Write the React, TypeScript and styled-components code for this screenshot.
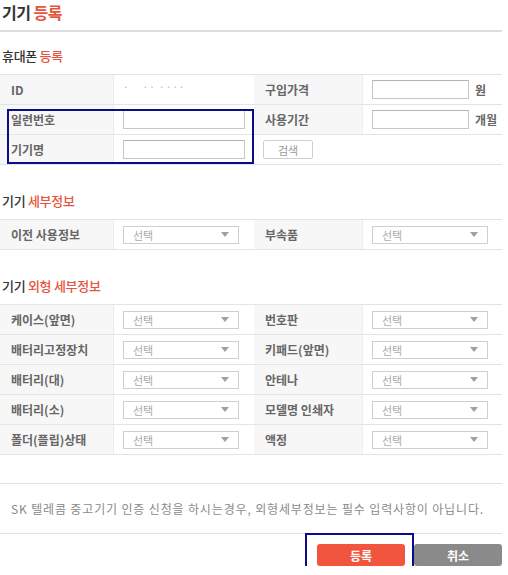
import React from 'react';
import styled, { createGlobalStyle } from 'styled-components';

const GlobalStyle = createGlobalStyle`
  html, body {
    margin: 0;
    padding: 0;
    background: #fff;
  }
  body {
    font-family: "Noto Sans CJK KR", "Noto Sans", sans-serif;
    color: #333;
  }
`;

const Page = styled.div`
  position: relative;
  width: 502px;
`;

const Title = styled.h1`
  margin: 0;
  padding: 0 2px;
  height: 30px;
  line-height: 24px;
  font-size: 16px;
  font-weight: 700;
  color: #333;
  letter-spacing: -0.5px;
`;

const Accent = styled.span`
  color: #e8533d;
`;

const TopRule = styled.div`
  height: 2px;
  background: #dcdcdc;
`;

const Heading = styled.h2<{ $top: number }>`
  margin: ${p => p.$top}px 0 8px;
  padding: 0 2px;
  height: 20px;
  line-height: 20px;
  font-size: 13px;
  font-weight: 500;
  color: #333;
  letter-spacing: -0.3px;
`;

const Table = styled.div`
  border-top: 1px solid #e4e4e4;
`;

const Row = styled.div`
  display: grid;
  grid-template-columns: 113px 141px 108px 1fr;
  height: 30px;
  box-sizing: border-box;
  border-bottom: 1px solid #e4e4e4;
`;

const Label = styled.div`
  display: flex;
  align-items: center;
  padding-left: 11px;
  background: #f7f7f7;
  font-size: 12px;
  font-weight: 700;
  color: #666;
  white-space: nowrap;
`;

const Cell = styled.div<{ $span?: number }>`
  display: flex;
  align-items: center;
  gap: 4px;
  padding-left: 9px;
  border-left: 1px solid #ededed;
  grid-column: ${p => (p.$span ? `span ${p.$span}` : 'auto')};
`;

const PlainCell = styled(Cell)`
  border-left: none;
`;

const TextInput = styled.input<{ $w: number }>`
  box-sizing: border-box;
  width: ${p => p.$w}px;
  height: 19px;
  margin: 0;
  padding: 0 4px;
  border: 1px solid #c6c6c6;
  border-top-color: #b4b4b4;
  background: #fff;
  outline: none;
`;

const Unit = styled.span`
  font-size: 12px;
  font-weight: 700;
  color: #666;
  margin-left: 2px;
  white-space: nowrap;
`;

const Masked = styled.span`
  font-size: 10px;
  color: #b8b8b8;
  letter-spacing: 1px;
  margin-top: -6px;
`;

const SmallButton = styled.button`
  box-sizing: border-box;
  width: 50px;
  height: 19px;
  padding: 0;
  border: 1px solid #cfcfcf;
  border-radius: 2px;
  background: #fff;
  font-family: inherit;
  font-size: 11px;
  color: #999;
`;

const SelectBox = styled.div`
  box-sizing: border-box;
  width: 116px;
  height: 18px;
  display: flex;
  align-items: center;
  justify-content: space-between;
  padding: 0 9px 0 9px;
  border: 1px solid #cfcfcf;
  background: #fff;
  font-size: 11px;
  color: #aaa;
`;

const Notice = styled.div`
  margin-top: 28px;
  height: 51px;
  box-sizing: border-box;
  border-top: 1px solid #e0e0e0;
  border-bottom: 1px solid #e0e0e0;
  display: flex;
  align-items: center;
  padding-left: 11px;
  font-size: 12px;
  color: #8a8a8a;
  letter-spacing: 0.85px;
  white-space: nowrap;
`;

const Actions = styled.div`
  display: flex;
  justify-content: flex-end;
  gap: 9px;
  margin-top: 10px;
`;

const ActionButton = styled.button<{ $tone: 'red' | 'gray' }>`
  width: 88px;
  height: 22px;
  padding: 0;
  border: none;
  border-radius: 3px;
  background: ${p => (p.$tone === 'red' ? '#f1553e' : '#8a8a8a')};
  color: #fff;
  font-family: inherit;
  font-size: 12px;
  font-weight: 700;
`;

const Highlight = styled.div<{ $x: number; $y: number; $w: number; $h: number }>`
  position: absolute;
  left: ${p => p.$x}px;
  top: ${p => p.$y}px;
  width: ${p => p.$w}px;
  height: ${p => p.$h}px;
  box-sizing: border-box;
  border: 2px solid #0c0c8a;
  pointer-events: none;
`;

const Arrow = () => (
  <svg width="8" height="5" viewBox="0 0 8 5">
    <path d="M0 0 H8 L4 5 Z" fill="#a0a0a0" />
  </svg>
);

const Select = () => (
  <SelectBox>
    <span>선택</span>
    <Arrow />
  </SelectBox>
);

const exterior: [string, string][] = [
  ['케이스(앞면)', '번호판'],
  ['배터리고정장치', '키패드(앞면)'],
  ['배터리(대)', '안테나'],
  ['배터리(소)', '모델명 인쇄자'],
  ['폴더(플립)상태', '액정'],
];

export default function App() {
  return (
    <Page>
      <GlobalStyle />
      <Title>
        기기 <Accent>등록</Accent>
      </Title>
      <TopRule />

      <Heading $top={14}>
        휴대폰 <Accent>등록</Accent>
      </Heading>
      <Table>
        <Row>
          <Label>ID</Label>
          <Cell>
            <Masked>·&nbsp;&nbsp;&nbsp;&nbsp;··&nbsp;····</Masked>
          </Cell>
          <Label>구입가격</Label>
          <Cell>
            <TextInput $w={97} />
            <Unit>원</Unit>
          </Cell>
        </Row>
        <Row>
          <Label>일련번호</Label>
          <Cell>
            <TextInput $w={122} />
          </Cell>
          <Label>사용기간</Label>
          <Cell>
            <TextInput $w={97} />
            <Unit>개월</Unit>
          </Cell>
        </Row>
        <Row>
          <Label>기기명</Label>
          <Cell>
            <TextInput $w={122} />
          </Cell>
          <PlainCell $span={2}>
            <SmallButton>검색</SmallButton>
          </PlainCell>
        </Row>
      </Table>

      <Heading $top={26}>
        기기 <Accent>세부정보</Accent>
      </Heading>
      <Table>
        <Row>
          <Label>이전 사용정보</Label>
          <Cell>
            <Select />
          </Cell>
          <Label>부속품</Label>
          <Cell>
            <Select />
          </Cell>
        </Row>
      </Table>

      <Heading $top={26}>
        기기 <Accent>외형 세부정보</Accent>
      </Heading>
      <Table>
        {exterior.map(([left, right]) => (
          <Row key={left}>
            <Label>{left}</Label>
            <Cell>
              <Select />
            </Cell>
            <Label>{right}</Label>
            <Cell>
              <Select />
            </Cell>
          </Row>
        ))}
      </Table>

      <Notice>
        SK 텔레콤 중고기기 인증 신청을 하시는경우, 외형세부정보는 필수 입력사항이 아닙니다.
      </Notice>

      <Actions>
        <ActionButton $tone="red">등록</ActionButton>
        <ActionButton $tone="gray">취소</ActionButton>
      </Actions>

      <Highlight $x={7} $y={109} $w={247} $h={55} />
      <Highlight $x={305} $y={533} $w={109} $h={35} />
    </Page>
  );
}
